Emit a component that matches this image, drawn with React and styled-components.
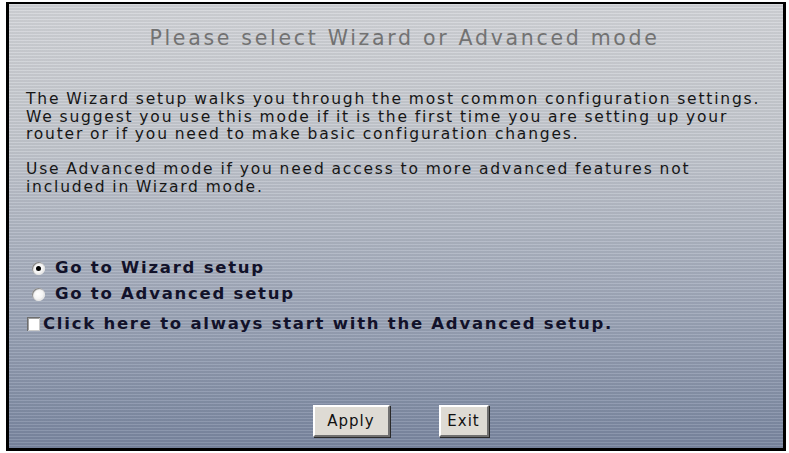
import React from 'react'
import styled, { createGlobalStyle } from 'styled-components'

const Global = createGlobalStyle`
  html, body {
    margin: 0;
    padding: 0;
    background: #ffffff;
  }
  body {
    font-family: "DejaVu Sans", Verdana, sans-serif;
  }
`

const Page = styled.div`
  width: 789px;
  height: 453px;
  padding: 2px 3px 2px 6px;
  box-sizing: border-box;
`

const Frame = styled.div`
  height: 100%;
  box-sizing: border-box;
  border: 3px solid #000;
  border-top-width: 2px;
  background:
    repeating-linear-gradient(
      to bottom,
      rgba(255, 255, 255, 0.10) 0px,
      rgba(255, 255, 255, 0.10) 1px,
      rgba(0, 0, 0, 0.05) 1px,
      rgba(0, 0, 0, 0.05) 3px
    ),
    linear-gradient(to bottom, #d4d6da 0%, #c4c8cf 32%, #a6aebe 62%, #7a87a1 100%);
  display: flex;
  flex-direction: column;
  padding: 0 0 0 17px;
`

const Title = styled.h1`
  margin: 22px 0 0;
  font-size: 20.5px;
  line-height: 24px;
  letter-spacing: 2.7px;
  font-weight: normal;
  color: #727272;
  text-align: center;
`

const Para = styled.p`
  margin: ${p => p.first ? '41px' : '17.5px'} 0 0;
  font-size: 15.5px;
  line-height: 17.5px;
  letter-spacing: 1.8px;
  word-spacing: -0.75px;
  white-space: nowrap;
  color: #161616;
`

const Options = styled.div`
  margin-top: 62px;
  display: flex;
  flex-direction: column;
`

const Option = styled.label`
  display: flex;
  align-items: center;
  height: 20px;
  margin-top: ${p => p.offset || 0}px;
  padding-left: ${p => p.indent ? '6px' : '1px'};
  font-size: 16.5px;
  line-height: 20px;
  letter-spacing: 1.75px;
  font-weight: bold;
  color: #12122a;
`

const Radio = styled.span`
  width: 13px;
  height: 13px;
  margin-right: 10px;
  border-radius: 50%;
  background: radial-gradient(circle at 45% 45%, #ffffff 0%, #f4f4f4 50%, #c4c4c4 100%);
  box-shadow: inset 1px 1px 1px #7d7d7d, inset -1px -1px 0 #e8e8e8;
  display: flex;
  align-items: center;
  justify-content: center;
  &::after {
    content: '';
    width: 5px;
    height: 5px;
    border-radius: 50%;
    background: ${p => p.checked ? '#000' : 'transparent'};
  }
`

const Check = styled.span`
  width: 13px;
  height: 14px;
  margin-right: 3px;
  box-sizing: border-box;
  background: #ffffff;
  border-top: 1px solid #6e6e6e;
  border-left: 1px solid #6e6e6e;
  box-shadow: inset -1px -1px 0 #c9c9c9, inset 1px 1px 0 #a0a0a0;
`

const Buttons = styled.div`
  margin-top: auto;
  margin-bottom: 11px;
  display: flex;
  justify-content: center;
  gap: 49px;
  padding-right: 8px;
`

const Button = styled.button`
  font-family: "DejaVu Sans", Verdana, sans-serif;
  font-size: 15px;
  letter-spacing: 1px;
  color: #111;
  background: #dedbd4;
  height: 32px;
  width: ${p => p.w}px;
  padding: 0;
  border: 2px solid;
  border-color: #ffffff #707070 #707070 #ffffff;
  box-shadow: 1px 1px 0 #2a2a2a;
`

export default function App() {
  return (
    <Page>
      <Global />
      <Frame>
        <Title>Please select Wizard or Advanced mode</Title>
        <Para first>
          The Wizard setup walks you through the most common configuration settings.<br />
          We suggest you use this mode if it is the first time you are setting up your<br />
          router or if you need to make basic configuration changes.
        </Para>
        <Para>
          Use Advanced mode if you need access to more advanced features not<br />
          included in Wizard mode.
        </Para>
        <Options>
          <Option indent>
            <Radio checked />
            Go to Wizard setup
          </Option>
          <Option indent offset={6}>
            <Radio />
            Go to Advanced setup
          </Option>
          <Option offset={10}>
            <Check />
            Click here to always start with the Advanced setup.
          </Option>
        </Options>
        <Buttons>
          <Button w={77}>Apply</Button>
          <Button w={50}>Exit</Button>
        </Buttons>
      </Frame>
    </Page>
  )
}
